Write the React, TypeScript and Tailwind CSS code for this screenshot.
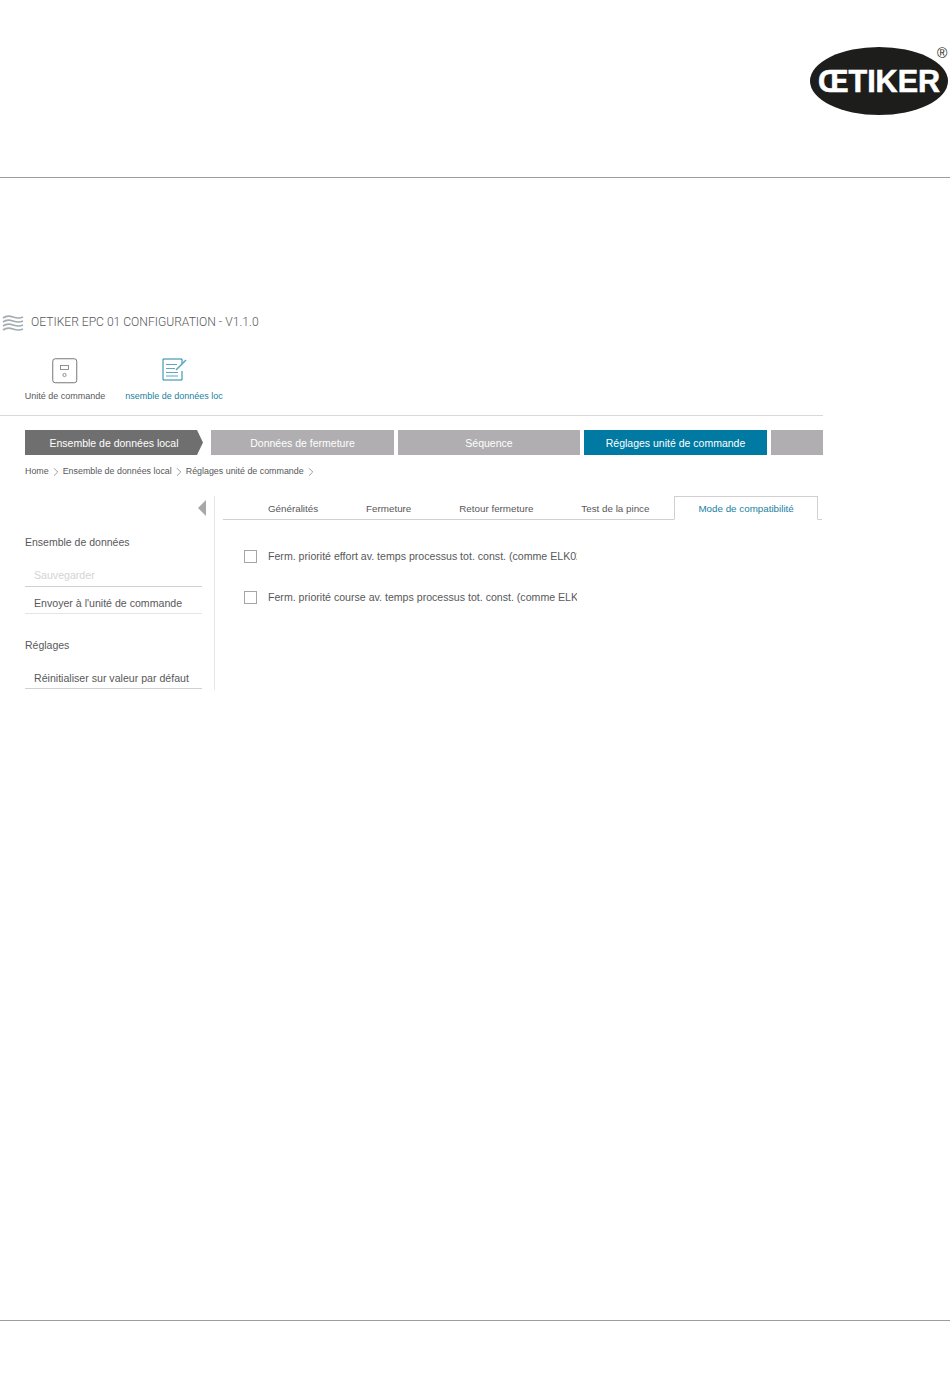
import { ChevronRight } from "lucide-react";

function Logo() {
  return (
    <svg width="142" height="72" viewBox="0 0 142 72" className="block">
      <ellipse cx="71" cy="38" rx="69" ry="34" fill="#1d1d1b" />
      <text
        x="71"
        y="49"
        textAnchor="middle"
        fill="#fff"
        stroke="#fff"
        strokeWidth="0.6"
        fontFamily="'Liberation Sans', Arial, sans-serif"
        fontWeight="700"
        fontSize="30.5"
      >
        ŒTIKER
      </text>
      <text
        x="129"
        y="15"
        fill="#1d1d1b"
        fontFamily="'Liberation Sans', Arial, sans-serif"
        fontSize="14"
      >
        ®
      </text>
    </svg>
  );
}

function WaveIcon() {
  return (
    <svg width="22" height="18" viewBox="0 0 22 18" fill="none" stroke="#a3adaf" strokeWidth="1.7">
      <path d="M1 4c4-3 7-2 10-1s6 2 10 0" />
      <path d="M1 8c4-3 7-2 10-1s6 2 10 0" />
      <path d="M1 12c4-3 7-2 10-1s6 2 10 0" />
      <path d="M1 16c4-3 7-2 10-1s6 2 10 0" />
    </svg>
  );
}

function ControllerIcon() {
  return (
    <svg width="26" height="26" viewBox="0 0 26 26" fill="none">
      <rect x="0.75" y="0.75" width="24" height="24" rx="2.5" stroke="#77777a" strokeWidth="1" />
      <rect x="8.5" y="7.5" width="8" height="4" stroke="#77777a" strokeWidth="0.8" />
      <circle cx="12.5" cy="17" r="1.6" stroke="#77777a" strokeWidth="0.8" />
    </svg>
  );
}

function DatasetIcon() {
  return (
    <svg width="26" height="24" viewBox="0 0 26 24" fill="none">
      <path d="M20 6V1H1v21h19v-9" stroke="#1f86a8" strokeWidth="1" />
      <path d="M4 6.5h11M4 10.5h9M4 14.5h12M4 18h12" stroke="#5fa8c0" strokeWidth="1.2" />
      <path d="M14 12 24 2" stroke="#5fa8c0" strokeWidth="1.6" />
    </svg>
  );
}

function Step({ label, className }: { label: string; className: string }) {
  return (
    <div className={`h-[25px] pt-[2px] flex items-center justify-center text-[10.5px] text-white ${className}`}>
      {label}
    </div>
  );
}

function Tab({ label }: { label: string }) {
  return <div className="px-[24px] pb-[2px] text-[9.8px] text-[#58585a] whitespace-nowrap">{label}</div>;
}

function Crumb({ label, gap }: { label: string; gap: string }) {
  return (
    <>
      <span>{label}</span>
      <span className={`flex justify-center text-[#58585a] ${gap}`}>
        <ChevronRight size={14} strokeWidth={1} />
      </span>
    </>
  );
}

function Option({ label }: { label: string }) {
  return (
    <div className="flex items-center h-[14px]">
      <div className="w-[13px] h-[13px] mb-[2px] border border-[#a5a5a5] shrink-0" />
      <div className="ml-[11px] w-[309px] overflow-hidden whitespace-nowrap text-[10.6px] text-[#58585a]">
        {label}
      </div>
    </div>
  );
}

export default function App() {
  return (
    <div className="w-[950px] h-[1397px] bg-white font-['Liberation_Sans',Arial,sans-serif] overflow-hidden">
      {/* Page header */}
      <div className="h-[178px] border-b border-[#9d9d9c] flex justify-end pt-[43px]">
        <div className="h-[72px]">
          <Logo />
        </div>
      </div>

      {/* Screenshot of the software */}
      <div className="w-[823px] mt-[136px]">
        <div className="flex items-center pl-[2px] h-[18px]">
          <WaveIcon />
          <span className="ml-[7px] mb-[2px] text-[12.1px] text-[#58585a] font-['Roboto',sans-serif] font-light">
            OETIKER EPC 01 CONFIGURATION - V1.1.0
          </span>
        </div>

        <div className="flex mt-[26px] h-[57px] border-b border-[#d9d9d9] box-content">
          <div className="ml-[25px] w-[80px] flex flex-col items-center">
            <ControllerIcon />
            <div className="mt-[6px] text-[9px] text-[#58585a] whitespace-nowrap">Unité de commande</div>
          </div>
          <div className="ml-[20px] w-[98px] flex flex-col items-center">
            <div className="ml-[2px]">
              <DatasetIcon />
            </div>
            <div className="mt-[8px] text-[9px] text-[#1a7fa3] whitespace-nowrap">nsemble de données loc</div>
          </div>
        </div>

        {/* Process steps */}
        <div className="flex mt-[14px] ml-[25px]">
          <Step
            label="Ensemble de données local"
            className="w-[178px] bg-[#706f6f] [clip-path:polygon(0_0,172px_0,100%_50%,172px_100%,0_100%)]"
          />
          <Step label="Données de fermeture" className="w-[183px] ml-[8px] bg-[#b0aeb0]" />
          <Step label="Séquence" className="w-[182px] ml-[4px] bg-[#b0aeb0]" />
          <Step label="Réglages unité de commande" className="w-[183px] ml-[4px] bg-[#0079a3]" />
          <div className="h-[25px] w-[52px] ml-[4px] bg-[#b0aeb0]" />
        </div>

        {/* Breadcrumb */}
        <div className="flex items-center mt-[11px] ml-[25px] h-[12px] text-[8.9px] text-[#58585a] whitespace-nowrap">
          <Crumb label="Home" gap="w-[14px]" />
          <Crumb label="Ensemble de données local" gap="w-[14px]" />
          <Crumb label="Réglages unité de commande" gap="w-[15px]" />
        </div>

        {/* Body */}
        <div className="flex mt-[18px] ml-[25px]">
          <div className="w-[177px] mr-[12px] shrink-0">
            <div className="flex justify-end pt-[4px] -mr-[4px]">
              <div className="w-[8px] h-[16px] bg-[#a8a8a8] [clip-path:polygon(100%_0,100%_100%,0_50%)]" />
            </div>
            <div className="mt-[20px] text-[10.5px] text-[#58585a] leading-[12px]">Ensemble de données</div>
            <div className="mt-[21px] h-[18px] pl-[9px] border-b border-[#d0d0d0] text-[10.6px] text-[#d4d4d4] leading-[12px]">
              Sauvegarder
            </div>
            <div className="h-[27px] pl-[9px] pt-[10px] border-b border-[#e4e4e4] text-[10.6px] text-[#58585a] leading-[12px] whitespace-nowrap">
              Envoyer à l'unité de commande
            </div>
            <div className="mt-[25px] text-[10.5px] text-[#58585a] leading-[12px]">Réglages</div>
            <div className="mt-[21px] h-[17px] pl-[9px] border-b border-[#d0d0d0] text-[10.6px] text-[#58585a] leading-[12px] whitespace-nowrap">
              Réinitialiser sur valeur par défaut
            </div>
          </div>

          <div className="flex-1 h-[194px] border-l border-[#e6e6e6] pl-[8px]">
            <div className="flex items-end h-[24px] pl-[21px] border-b border-[#d0d0d0] mr-[1px]">
              <Tab label="Généralités" />
              <Tab label="Fermeture" />
              <Tab label="Retour fermeture" />
              <Tab label="Test de la pince" />
              <div className="h-[24px] -mb-px ml-[1px] px-[23px] border border-[#d0d0d0] border-b-white bg-white text-[9.8px] text-[#1a7fa3] pt-[5px] whitespace-nowrap">
                Mode de compatibilité
              </div>
            </div>
            <div className="flex flex-col gap-[27px] mt-[30px] pl-[21px]">
              <Option label="Ferm. priorité effort av. temps processus tot. const. (comme ELK02" />
              <Option label="Ferm. priorité course av. temps processus tot. const. (comme ELK02" />
            </div>
          </div>
        </div>
      </div>

      {/* Page footer */}
      <div className="mt-[630px] border-t border-[#9d9d9c]" />
    </div>
  );
}
